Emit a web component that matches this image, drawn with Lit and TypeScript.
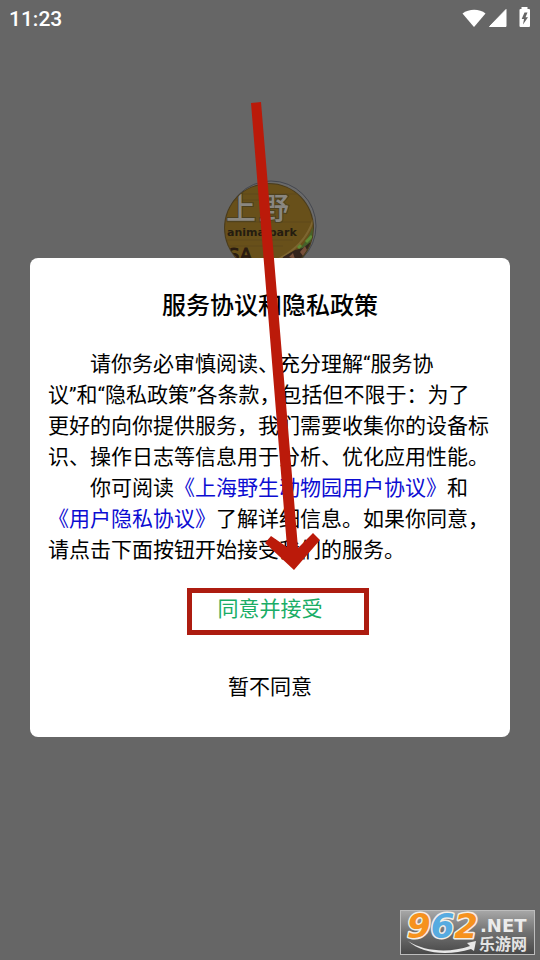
import { LitElement, html, css, svg } from "lit";
import { customElement } from "lit/decorators.js";

@customElement("status-bar")
class StatusBar extends LitElement {
  static styles = css`
    :host {
      display: flex;
      align-items: center;
      justify-content: space-between;
      height: 38px;
      padding: 0 9px;
      color: #fff;
      font: 500 21px/36px Roboto, sans-serif;
    }
    .icons {
      display: block;
    }
  `;

  render() {
    return html`
      <time>11:23</time>
      <svg class="icons" width="69" height="24" viewBox="0 0 69 24" fill="#fff" aria-hidden="true">
        <path d="M0.5 6.5C7 1.500 17.500 1.500 23.500 6.500L12.500 19.500Q12 20 11.500 19.500Z" />
        <path d="M44 2.500V19.500H27.500Z" stroke="#fff" stroke-linejoin="round" />
        <path
          fill-rule="evenodd"
          d="M59.500 0H65.500V2H67Q68 2 68 3V19Q68 20 67 20H58.500Q57.500 20 57.500 19V3Q57.500 2 58.500 2H59.500ZM62.500 5.500L59.700 12H62L61 17.500L66 10.300H63.500L65.500 5.500Z"
        />
      </svg>
    `;
  }
}

@customElement("app-logo")
class AppLogo extends LitElement {
  static styles = css`
    :host {
      display: block;
      width: 94px;
      height: 94px;
    }
    svg {
      display: block;
    }
    .name {
      font: 500 30px "Noto Sans CJK SC", sans-serif;
      paint-order: stroke;
    }
    .sub {
      font: 700 11px "DejaVu Sans", sans-serif;
    }
    .tag {
      font: 500 18px "DejaVu Sans", sans-serif;
    }
  `;

  render() {
    return html`
      <svg width="94" height="94" viewBox="0 0 94 94" role="img" aria-label="上野">
        <defs>
          <clipPath id="disc"><circle cx="46" cy="48" r="44" /></clipPath>
        </defs>
        <circle cx="48" cy="46" r="45" fill="#6a6a6a" stroke="#43464e" />
        <circle cx="46" cy="48" r="45" fill="#4a3c1d" />
        <g clip-path="url(#disc)">
          <rect width="94" height="94" fill="#68501a" />
          <path d="M10 14H86M0 20H40M4 42H90M0 60H70M0 66H60" stroke="#5f491a" fill="none" />
          <path d="M94 34C88 60 74 76 50 88H94Z" fill="#46602a" />
          <path d="M92 34C86 58 72 72 46 84" stroke="#7d6530" stroke-width="2" fill="none" />
          <path d="M60 77L72 70L80 68L90 60V68L84 74L86 84H58Z" fill="#33241c" />
          <path d="M77 72L82 66L84 70L80 76ZM66 77L70 73L72 79Z" fill="#77503a" />
          <path d="M83 62L89 56M75 68L78 65" stroke="#5f8a35" stroke-width="3" />
          <text class="name" y="39" fill="#8a8780" stroke="#4c401f" stroke-width="2">
            <tspan x="3">上</tspan><tspan x="36">野</tspan>
          </text>
          <text class="sub" x="4" y="56" fill="#241c10">animalpark</text>
          <text class="tag" x="5" y="81" fill="#2a1b10" stroke="#2a1b10">SA</text>
        </g>
      </svg>
    `;
  }
}

@customElement("site-badge")
class SiteBadge extends LitElement {
  static styles = css`
    :host {
      display: block;
    }
    svg {
      display: block;
      overflow: visible;
    }
    .digits {
      font: italic 700 34px "DejaVu Sans", sans-serif;
      paint-order: stroke;
    }
    .net {
      font: 700 18px "DejaVu Sans", sans-serif;
    }
    .cjk {
      font: 700 16px "Noto Sans CJK SC", sans-serif;
    }
  `;

  render() {
    const digits = [
      { ch: "9", fill: "#f6921e" },
      { ch: "6", fill: "#57abe0" },
      { ch: "2", fill: "#f6921e" },
    ];
    return html`
      <svg width="135" height="46" viewBox="0 0 135 46" role="img" aria-label="962.NET 乐游网">
        <defs>
          <linearGradient id="metal" x2="0" y2="1">
            <stop offset="0" stop-color="#a8a8a8" />
            <stop offset="0.500" stop-color="#707070" />
            <stop offset="1" stop-color="#484848" />
          </linearGradient>
        </defs>
        <rect x="0.500" y="0.500" width="134" height="44" fill="url(#metal)" stroke="#bdbdbd" />
        <path
          d="M8 31C25 42 50 43 70 36L67 33L76 31L74 41L71 39C48 46 22 44 8 31Z"
          fill="#e8e8e8"
        />
        <text class="digits" x="7" y="28" stroke="#f4eee6" stroke-width="3" stroke-linejoin="round">${digits.map(
          (d) => svg`<tspan fill=${d.fill}>${d.ch}</tspan>`
        )}</text>
        <text class="net" x="80" y="22" fill="#ececec">.NET</text>
        <text class="cjk" x="79" y="40" fill="#e4e4e4">乐游网</text>
      </svg>
    `;
  }
}

@customElement("app-root")
class AppRoot extends LitElement {
  static styles = css`
    :host {
      display: flex;
      flex-direction: column;
      position: relative;
      min-height: 100vh;
      background: #666;
      font-family: Roboto, "Noto Sans CJK SC", sans-serif;
      text-spacing-trim: space-all;
    }
    .stage {
      flex: 1;
      display: grid;
      grid-template-columns: 1fr;
      padding-bottom: 3px;
    }
    .logo,
    .dialog {
      grid-area: 1 / 1;
    }
    .logo {
      justify-self: center;
      margin-top: 142px;
    }
    .dialog {
      position: relative;
      align-self: center;
      display: flex;
      flex-direction: column;
      align-items: center;
      box-sizing: border-box;
      margin: 0 30px;
      padding: 30px 18px 34px;
      border-radius: 8px;
      background: #fff;
      color: #000;
      font-size: 21px;
      line-height: 31px;
    }
    .title {
      margin: 0 0 25px;
      font-size: 24px;
      font-weight: 500;
      line-height: 36px;
    }
    .terms {
      align-self: stretch;
      margin-bottom: 28px;
    }
    .terms p {
      margin: 0;
      text-indent: 2em;
    }
    .terms a {
      color: #0c0cd2;
      text-decoration: none;
    }
    button {
      padding: 0;
      border: 0;
      background: none;
      color: inherit;
      font: inherit;
      cursor: pointer;
    }
    .accept {
      margin-bottom: 47px;
      color: #1aad66;
    }
    .guide {
      position: absolute;
      top: 0;
      left: 50%;
      overflow: visible;
      pointer-events: none;
    }
    .badge {
      position: absolute;
      right: 5px;
      bottom: 4px;
    }
  `;

  render() {
    return html`
      <status-bar></status-bar>
      <main class="stage">
        <app-logo class="logo"></app-logo>
        <section class="dialog" role="dialog" aria-labelledby="title">
          <h1 class="title" id="title">服务协议和隐私政策</h1>
          <div class="terms">
            <p>请你务必审慎阅读、充分理解“服务协<br />议”和“隐私政策”各条款，包括但不限于：为了<br />更好的向你提供服务，我们需要收集你的设备标识、操作日志等信息用于分析、优化应用性能。</p>
            <p>你可阅读<a href="#user">《上海野生动物园用户协议》</a>和<br /><a href="#privacy">《用户隐私协议》</a>了解详细信息。如果你同意，请点击下面按钮开始接受我们的服务。</p>
          </div>
          <button class="accept" type="button">同意并接受</button>
          <button type="button">暂不同意</button>
          <svg class="guide" width="1" height="1" aria-hidden="true">
            <path
              fill="#bb1a0a"
              d="M-19 -155L-9 -156L28 290L43 275L50 282L24 312L-5 285L1 278L17 289Z"
            />
            <rect x="-80.500" y="332.500" width="177" height="42" fill="none" stroke="#ad1c10" stroke-width="5" />
          </svg>
        </section>
      </main>
      <site-badge class="badge"></site-badge>
    `;
  }
}
